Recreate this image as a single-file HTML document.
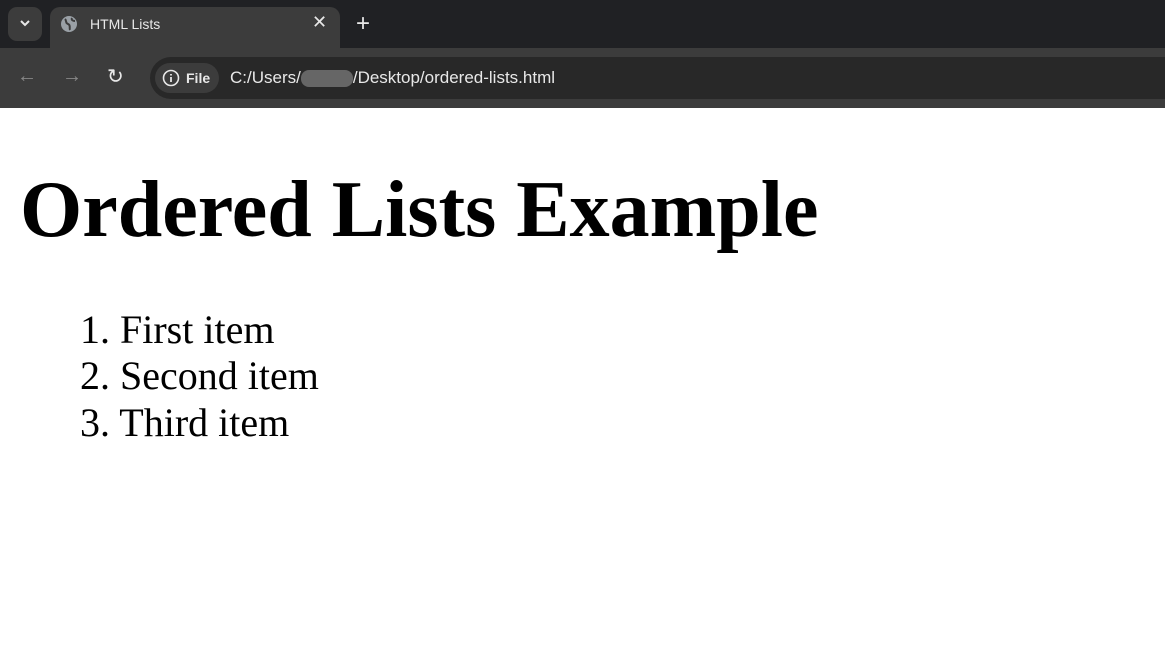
<!DOCTYPE html>
<html><head><style>
body{margin:0;width:1165px;height:655px;overflow:hidden;background:#fff;font-family:"Liberation Serif",serif}
.tabs{position:absolute;left:0;top:0;width:1165px;height:48px;background:#202124}
.tb{position:absolute;left:0;top:48px;width:1165px;height:60px;background:#3c3c3c}
.tab{position:absolute;left:50px;top:7px;width:290px;height:45px;background:#3c3c3c;border-radius:10px 10px 0 0;color:#e8e8e8;font:14px "Liberation Sans",sans-serif}
.dd{position:absolute;left:8px;top:7px;width:34px;height:34px;background:#3c3c3c;border-radius:9px}
.omni{position:absolute;left:150px;top:57px;width:1015px;height:42px;background:#282828;border-radius:21px 0 0 21px}
.chip{position:absolute;left:155px;top:63px;width:64px;height:30px;background:#3c3c3c;border-radius:15px}
.t{position:absolute;font-family:"Liberation Sans",sans-serif;color:#e8e8e8}
h1{position:absolute;left:20px;top:162px;margin:0;font-size:80px;font-weight:bold;line-height:96px;white-space:nowrap}
.li{position:absolute;left:80px;font-size:40px;line-height:46px}
</style></head><body>
<div class="tabs"></div><div class="tb"></div>
<div class="dd"></div>
<svg style="position:absolute;left:18px;top:18px" width="14" height="10"><path d="M3 3l4 4 4-4" stroke="#e8e8e8" stroke-width="2" fill="none"/></svg>
<div class="tab"></div>
<svg style="position:absolute;left:60px;top:15px" width="18" height="18"><circle cx="9" cy="9" r="8" fill="#9aa0a6"/><path d="M5 4c2 2 0 4 3 5s1 4 2 6M12 3c-1 2 1 3 3 3" stroke="#3c3c3c" stroke-width="2" fill="none"/></svg>
<div class="t" style="left:90px;top:16px;font-size:14px">HTML Lists</div>
<div class="t" style="left:312px;top:12px;font-size:18px">✕</div>
<div class="t" style="left:356px;top:10px;font-size:24px">+</div>
<div class="t" style="left:17px;top:65px;font-size:20px;color:#888">←</div>
<div class="t" style="left:62px;top:65px;font-size:20px;color:#888">→</div>
<div class="t" style="left:107px;top:64px;font-size:20px">↻</div>
<div class="omni"></div><div class="chip"></div>
<svg style="position:absolute;left:162px;top:69px" width="18" height="18"><circle cx="9" cy="9" r="7.5" stroke="#e8e8e8" stroke-width="1.6" fill="none"/><path d="M9 8v5M9 5v1.5" stroke="#e8e8e8" stroke-width="1.8"/></svg>
<div class="t" style="left:186px;top:70px;font-size:14px;font-weight:bold">File</div>
<div class="t" style="left:230px;top:68px;font-size:17px">C:/Users/<span style="display:inline-block;width:52px;height:17px;background:#666;border-radius:8px;vertical-align:middle"></span>/Desktop/ordered-lists.html</div>
<h1>Ordered Lists Example</h1>
<div class="li" style="top:307px">1. First item</div>
<div class="li" style="top:353px">2. Second item</div>
<div class="li" style="top:400px">3. Third item</div>
</body></html>
